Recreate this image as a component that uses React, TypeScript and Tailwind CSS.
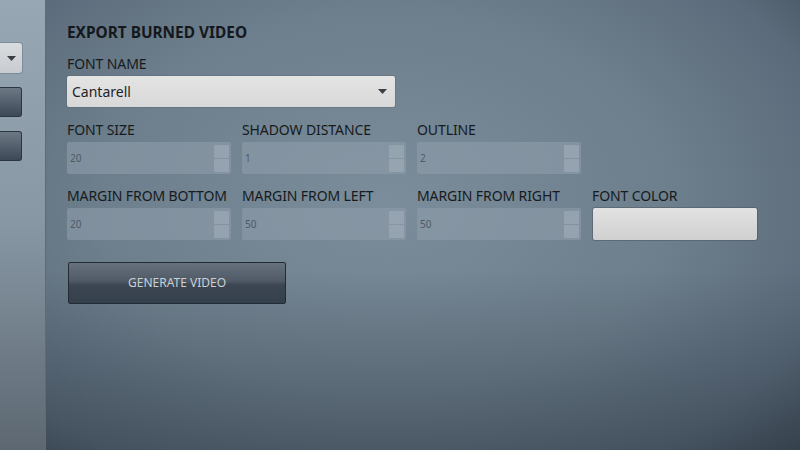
import React from "react";

const FONT = "font-['Noto_Sans','Open_Sans',sans-serif]";

function SpinBox({ value }: { value: string }) {
  return (
    <div className="flex h-[32px] w-[164px] items-center justify-between rounded-[2px] bg-[#8d9daa]/60 pl-[3px] pr-[2px]">
      <span className="text-[10px] text-[#4d5b67]">{value}</span>
      <div className="flex flex-col gap-px">
        <span className="h-[13px] w-[15px] rounded-[1px] bg-[#98a7b3]/80" />
        <span className="h-[13px] w-[15px] rounded-[1px] bg-[#98a7b3]/80" />
      </div>
    </div>
  );
}

function Field({ label, children }: { label: string; children: React.ReactNode }) {
  return (
    <div className="flex w-[164px] flex-col gap-[3px]">
      <span className="whitespace-nowrap text-[14px] leading-[18px] tracking-[-0.1px] text-[#161b20]">{label}</span>
      {children}
    </div>
  );
}

function Caret() {
  return (
    <svg width="9" height="5" viewBox="0 0 9 5" aria-hidden>
      <path d="M0 0h9L4.5 5z" fill="#3a3f44" />
    </svg>
  );
}

export default function App() {
  return (
    <div className={`flex h-[450px] w-[800px] overflow-hidden ${FONT}`}>
      <aside className="flex w-[46px] shrink-0 flex-col gap-[14px] border-r border-[#5d6c78] bg-[linear-gradient(180deg,#97a7b4_0%,#8797a4_50%,#5c6771_100%)] pt-[43px]">
        <div className="flex h-[30px] w-[22px] items-center justify-end rounded-r-[3px] bg-[linear-gradient(180deg,#d9dcdf,#c8ccd0)] pr-[6px] shadow-[0_0_0_1px_rgba(60,70,80,0.25)]">
          <Caret />
        </div>
        <div className="h-[30px] w-[22px] rounded-r-[3px] border border-l-0 border-[#2c3640] bg-[linear-gradient(180deg,#6c7985,#3c4855)]" />
        <div className="h-[30px] w-[22px] rounded-r-[3px] border border-l-0 border-[#2c3640] bg-[linear-gradient(180deg,#6c7985,#3c4855)]" />
      </aside>

      <main className="relative flex-1 bg-[radial-gradient(ellipse_85%_95%_at_45%_45%,#7b8c9a_0%,#6d7e8c_45%,#5b6b7b_72%,#323d46_100%)] px-[21px] pt-[23px]">
        <div className="pointer-events-none absolute inset-0 bg-[linear-gradient(180deg,rgba(0,0,0,0)_60%,rgba(20,28,36,0.32)_100%)]" />
        <div className="relative flex flex-col">
          <h1 className="text-[15.4px] font-bold leading-[20px] text-[#14181c]">EXPORT BURNED VIDEO</h1>

          <div className="mt-[12px] flex flex-col gap-[3px]">
            <span className="text-[14px] leading-[18px] tracking-[-0.1px] text-[#161b20]">FONT NAME</span>
            <div className="flex h-[31px] w-[328px] items-center justify-between rounded-[2px] bg-[linear-gradient(180deg,#e4e4e4,#d8d8d8)] pl-[5px] pr-[8px] shadow-[0_0_0_1px_rgba(90,100,110,0.35)]">
              <span className="text-[14px] text-[#1d2226]">Cantarell</span>
              <Caret />
            </div>
          </div>

          <div className="mt-[14px] flex gap-[11px]">
            <Field label="FONT SIZE">
              <SpinBox value="20" />
            </Field>
            <Field label="SHADOW DISTANCE">
              <SpinBox value="1" />
            </Field>
            <Field label="OUTLINE">
              <SpinBox value="2" />
            </Field>
          </div>

          <div className="mt-[13px] flex gap-[11px]">
            <Field label="MARGIN FROM BOTTOM">
              <SpinBox value="20" />
            </Field>
            <Field label="MARGIN FROM LEFT">
              <SpinBox value="50" />
            </Field>
            <Field label="MARGIN FROM RIGHT">
              <SpinBox value="50" />
            </Field>
            <Field label="FONT COLOR">
              <div className="ml-px h-[32px] w-[164px] rounded-[2px] bg-[linear-gradient(180deg,#e2e2e2,#d0d0d0)] shadow-[0_0_0_1px_rgba(70,80,90,0.45)]" />
            </Field>
          </div>

          <button className="mt-[22px] ml-px flex h-[42px] w-[218px] items-center justify-center rounded-[2px] border border-[#232c35] bg-[linear-gradient(180deg,#66717d_0%,#4f5a66_45%,#3b4652_55%,#34404b_100%)] text-[12px] text-[#c9d0d6]">
            GENERATE VIDEO
          </button>
        </div>
      </main>
    </div>
  );
}
